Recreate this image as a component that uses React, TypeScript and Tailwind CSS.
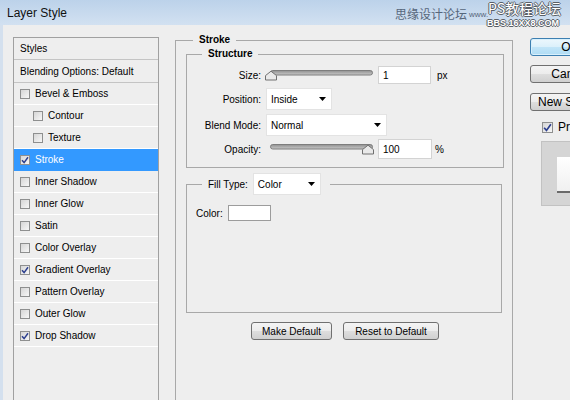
import React from "react";

const FONT = "font-['Liberation_Sans','Noto_Sans_CJK_SC',Arial,sans-serif]";

function CheckBox({ checked, size = 10 }: { checked?: boolean; size?: number }) {
  return (
    <span
      className="shrink-0 flex items-center justify-center border border-[#8e8f8f] bg-linear-to-br from-[#d6d6d6] to-[#f7f7f7]"
      style={{ width: size, height: size }}
    >
      {checked && (
        <svg width={size - 2} height={size - 2} viewBox="0 0 8 8">
          <path d="M1 4.2 L3.1 6.6 L7 1.2" stroke="#2c3f8e" strokeWidth="1.5" fill="none" />
        </svg>
      )}
    </span>
  );
}

function Select({ value, width }: { value: string; width: number }) {
  return (
    <div
      className="h-[22px] bg-white border border-[#e3e3e3] flex items-center justify-between pl-[4px] pr-[5px] font-normal"
      style={{ width }}
    >
      <span>{value}</span>
      <svg width="7" height="4" viewBox="0 0 7 4">
        <path d="M0 0 H7 L3.5 4 Z" fill="#000" />
      </svg>
    </div>
  );
}

function Slider({ thumb }: { thumb: number }) {
  return (
    <svg width="110" height="11" viewBox="0 0 110 11" className="shrink-0">
      <defs>
        <linearGradient id={`tr${thumb}`} x1="0" y1="0" x2="0" y2="1">
          <stop offset="0" stopColor="#8f8f8f" />
          <stop offset="1" stopColor="#c9c9c9" />
        </linearGradient>
      </defs>
      <rect x="5.5" y="0.5" width="102" height="4.5" rx="2.2" fill={`url(#tr${thumb})`} stroke="#7d7d7d" />
      <path
        d={`M${thumb + 0.5} 10 V5.6 L${thumb + 6} 1.2 L${thumb + 11.5} 5.6 V10 Z`}
        fill="#e9e9e9"
        stroke="#707070"
        strokeLinejoin="round"
      />
    </svg>
  );
}

function WinButton({ children, w }: { children: React.ReactNode; w: number }) {
  return (
    <div
      className="h-[18px] rounded-[3px] border border-[#707070] bg-[linear-gradient(#f4f4f4,#ececec_50%,#dedede_50%,#d0d0d0)] flex items-center justify-center shrink-0"
      style={{ width: w }}
    >
      {children}
    </div>
  );
}

const items: { label: string; checked?: boolean; indent?: boolean; selected?: boolean }[] = [
  { label: "Bevel & Emboss" },
  { label: "Contour", indent: true },
  { label: "Texture", indent: true },
  { label: "Stroke", checked: true, selected: true },
  { label: "Inner Shadow" },
  { label: "Inner Glow" },
  { label: "Satin" },
  { label: "Color Overlay" },
  { label: "Gradient Overlay", checked: true },
  { label: "Pattern Overlay" },
  { label: "Outer Glow" },
  { label: "Drop Shadow", checked: true },
];

export default function App() {
  return (
    <div className={`w-[570px] h-[400px] overflow-hidden relative bg-[#eeeeee] text-[10px] text-black ${FONT}`}>
      {/* Title bar */}
      <div className="h-[25px] bg-linear-to-b from-[#bcd2ea] to-[#d2e1f1] flex items-center pl-[7px] text-[12px] text-[#111]">
        Layer Style
      </div>

      {/* Body */}
      <div className="flex items-start h-[375px] border-l-[3px] border-[#d4e0ee]">
        {/* Styles list */}
        <div className="mt-[12px] ml-[10px] w-[146px] h-[380px] shrink-0 border border-[#a0a0a0] flex flex-col">
          <div className="h-[22px] shrink-0 flex items-center pl-[6px] border-b border-[#c4c4c4]">Styles</div>
          <div className="h-[23px] shrink-0 flex items-center pl-[6px] border-b border-[#c4c4c4]">
            Blending Options: Default
          </div>
          {items.map((it) => (
            <div
              key={it.label}
              className={`h-[22px] shrink-0 flex items-center gap-[5px] border-b ${
                it.selected ? "bg-[#3399ff] text-white border-[#3399ff]" : "border-white"
              } ${it.indent ? "pl-[19px]" : "pl-[6px]"}`}
            >
              <CheckBox checked={it.checked} />
              <span>{it.label}</span>
            </div>
          ))}
        </div>

        {/* Main panel */}
        <fieldset className="ml-[16px] mt-[9px] w-[338px] h-[380px] shrink-0 min-w-0 border border-[#a8a8a8]">
          <legend className="ml-[17px] px-[6px] font-bold leading-[12px]">Stroke</legend>

          <fieldset className="mt-[2px] ml-[10px] mr-[8px] min-w-0 border border-[#a8a8a8]">
            <legend className="ml-[15px] px-[6px] font-bold leading-[12px]">Structure</legend>
            <div className="pt-[6px] pb-[8px] flex flex-col">
              <div className="h-[18px] flex items-center">
                <span className="w-[74px] text-right">Size:</span>
                <span className="ml-[4px] flex">
                  <Slider thumb={0} />
                </span>
                <div className="ml-[3px] w-[53px] h-[18px] bg-white border border-[#d3d3d3] flex items-center pl-[4px]">1</div>
                <span className="ml-[6px]">px</span>
              </div>
              <div className="mt-[4px] flex items-center">
                <span className="w-[74px] text-right">Position:</span>
                <span className="ml-[5px]">
                  <Select value="Inside" width={66} />
                </span>
              </div>
              <div className="mt-[4px] flex items-center">
                <span className="w-[74px] text-right">Blend Mode:</span>
                <span className="ml-[5px]">
                  <Select value="Normal" width={121} />
                </span>
              </div>
              <div className="mt-[3px] h-[20px] flex items-center">
                <span className="w-[74px] text-right">Opacity:</span>
                <span className="ml-[4px] flex">
                  <Slider thumb={97} />
                </span>
                <div className="ml-[3px] w-[54px] h-[20px] bg-white border border-[#d3d3d3] flex items-center pl-[4px]">100</div>
                <span className="ml-[3px]">%</span>
              </div>
            </div>
          </fieldset>

          <fieldset className="mt-[5px] ml-[10px] mr-[10px] min-w-0 border border-[#a8a8a8]">
            <legend className="ml-[15px] pl-[6px] pr-[9px] flex items-center">
              <span>Fill Type:</span>
              <span className="ml-[5px]">
                <Select value="Color" width={68} />
              </span>
            </legend>
            <div className="h-[117px] pt-[10px] pl-[9px]">
              <div className="flex items-center">
                <span>Color:</span>
                <div className="ml-[5px] w-[43px] h-[16px] bg-white border border-[#9c9c9c]" />
              </div>
            </div>
          </fieldset>

          <div className="mt-[9px] flex justify-center gap-[11px] pl-[2px]">
            <WinButton w={81}>Make Default</WinButton>
            <WinButton w={96}>Reset to Default</WinButton>
          </div>
        </fieldset>

        {/* Right column */}
        <div className="ml-[17px] mt-[13px] w-[80px] shrink-0 flex flex-col text-[12px]">
          <div className="h-[18px] w-[80px] rounded-[3px] border border-[#3c7fb1] bg-[linear-gradient(#ecf7fd,#dbf0fb_50%,#c2e5f8_50%,#afdcf4)] shadow-[inset_0_0_0_1px_#d8f0fc] flex items-center justify-center">
            OK
          </div>
          <div className="mt-[9px]">
            <WinButton w={80}>Cancel</WinButton>
          </div>
          <div className="mt-[10px]">
            <WinButton w={80}>New Style...</WinButton>
          </div>
          <div className="mt-[10px] ml-[12px] h-[12px] flex items-center gap-[5px]">
            <CheckBox checked size={11} />
            <span>Preview</span>
          </div>
          <div className="mt-[8px] ml-[11px] w-[70px] h-[65px] bg-[#d5d5d5] border border-[#c2c2c2] pt-[15px] pl-[15px]">
            <div className="w-[40px] h-[36px] bg-linear-to-b from-[#ffffff] to-[#f0f0f0] border-b-2 border-r border-b-[#6a6a6a] border-r-[#9a9a9a]" />
          </div>
        </div>
      </div>

      {/* Watermark */}
      <span className="absolute left-[395px] top-[7px] text-[12px] leading-[13px] text-[#56667b] font-['Noto_Sans_CJK_SC',sans-serif]">
        思缘设计论坛
      </span>
      <span className="absolute left-[469px] top-[11px] text-[8px] leading-[8px] text-[#56667b]">www.</span>
      <span className="absolute left-[488px] top-[1px] text-[14px] leading-[15px] text-white font-['Noto_Sans_CJK_SC',sans-serif] [text-shadow:1px_0_#5a5f66,-1px_0_#5a5f66,0_1px_#5a5f66,0_-1px_#5a5f66]">
        PS教程论坛
      </span>
      <span className="absolute left-[487px] top-[18px] text-[9px] leading-[10px] font-bold text-white [text-shadow:1px_0_#5a5f66,-1px_0_#5a5f66,0_1px_#5a5f66,0_-1px_#5a5f66]">
        BBS.16XX8.COM
      </span>
    </div>
  );
}
